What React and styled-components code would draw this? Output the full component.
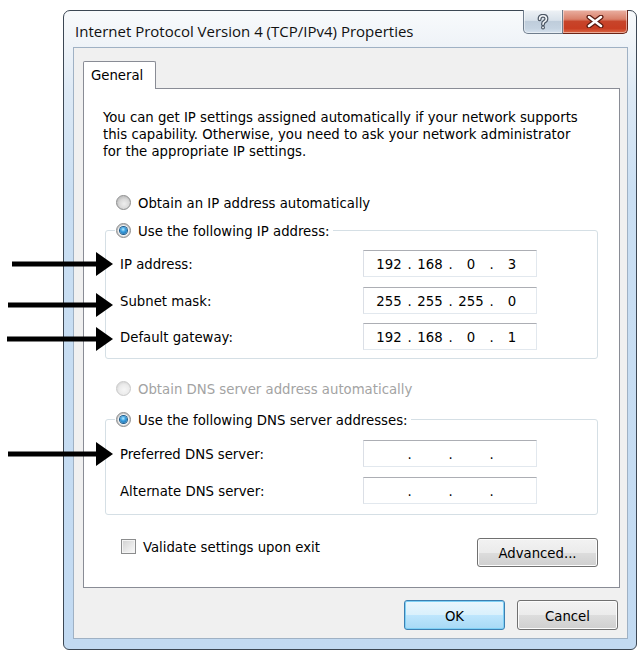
import React from "react";
import styled, { createGlobalStyle } from "styled-components";

const GlobalStyle = createGlobalStyle`
  html, body {
    margin: 0;
    padding: 0;
    background: #fff;
  }
  body {
    font-family: "DejaVu Sans Condensed", "DejaVu Sans", sans-serif;
    font-size: 14.75px;
    color: #000;
  }
`

const Page = styled.div`
  position: relative;
  width: 640px;
  height: 654px;
  padding: 10px 0 0 63px;
  box-sizing: border-box;
  overflow: hidden;
`

const Window = styled.div`
  width: 574px;
  height: 640px;
  box-sizing: border-box;
  border: 1px solid #3c4754;
  border-radius: 7px 7px 6px 6px;
  padding: 0 8px 10px 9px;
  display: flex;
  flex-direction: column;
  background: linear-gradient(180deg, #f8fafc 0px, #f0f4f8 30px, #dde9f5 80px, #cadff3 180px, #c2daf2 100%);
`

const TitleBar = styled.div`
  height: 36px;
  display: flex;
  align-items: flex-start;
  justify-content: space-between;
`

const Title = styled.div`
  margin-top: 11px;
  padding-left: 2px;
  font-family: "Open Sans", "Noto Sans", sans-serif;
  font-size: 15px;
  line-height: 19px;
  color: #111;
`

const Caption = styled.div`
  display: flex;
  margin-top: -1px;
`

const CaptionButton = styled.div`
  height: 24px;
  width: ${p => p.$w}px;
  box-sizing: border-box;
  display: flex;
  align-items: center;
  justify-content: center;
  border: 1px solid ${p => (p.$close ? "#6b2417" : "#6f7d8d")};
  border-top: none;
  border-left: ${p => (p.$close ? "none" : "1px solid #6f7d8d")};
  border-radius: ${p => (p.$close ? "0 0 5px 0" : "0 0 0 5px")};
  background: ${p =>
    p.$close
      ? "linear-gradient(180deg, #eab0a2 0%, #d9806a 40%, #c7442a 50%, #c83d22 80%, #dc6a48 100%)"
      : "linear-gradient(180deg, #eef2f6 0%, #d8e1ea 45%, #bfcddb 50%, #c5d3e1 80%, #d6e2ee 100%)"};
  box-shadow: inset 0 0 0 1px rgba(255, 255, 255, 0.45);
`

const Client = styled.div`
  flex: 1;
  display: flex;
  flex-direction: column;
  background: #f0f0f0;
  border: 1px solid #9fb1c4;
  padding: 13px 7px 8px 9px;
`

const TabStrip = styled.div`
  display: flex;
  height: 27px;
`

const Tab = styled.div`
  position: relative;
  z-index: 1;
  width: 73px;
  height: 28px;
  box-sizing: border-box;
  border: 1px solid #898c95;
  border-bottom: none;
  border-radius: 2px 2px 0 0;
  background: #fff;
  padding: 4px 0 0 7px;
  line-height: 17px;
`

const Panel = styled.div`
  background: #fff;
  border: 1px solid #898c95;
  padding: 19px 20px 20px 19px;
`

const Intro = styled.p`
  margin: 0;
  line-height: 17px;
`

const Option = styled.div`
  display: flex;
  align-items: center;
  gap: 7px;
  height: 17px;
  line-height: 17px;
  margin: ${p => p.$mt || 0}px 0 0 13px;
  color: ${p => (p.$disabled ? "#a3a3a3" : "#000")};
`

const Radio = styled.span`
  flex: none;
  width: 15px;
  height: 15px;
  box-sizing: border-box;
  border-radius: 50%;
  border: 1px solid ${p => (p.$disabled ? "#c9c9c9" : "#8b8c8d")};
  background: ${p =>
    p.$disabled
      ? "radial-gradient(circle at 55% 60%, #f6f6f6 0%, #ebebeb 50%, #dcdcdc 70%, #f2f2f2 100%)"
      : "radial-gradient(circle at 55% 60%, #eeeeee 0%, #d9d9d9 45%, #c2c2c2 68%, #f3f3f3 100%)"};
  display: flex;
  align-items: center;
  justify-content: center;
  &::after {
    content: "";
    display: ${p => (p.$checked ? "block" : "none")};
    width: 7px;
    height: 7px;
    border-radius: 50%;
    background: radial-gradient(circle at 45% 35%, #b5ecff 0%, #3a9fe0 40%, #125f9c 100%);
    box-shadow: 0 0 0 1px #1c5a8a, 0 0 0 2px #f4f4f4;
  }
`

const Group = styled.fieldset`
  width: 493px;
  box-sizing: border-box;
  margin: ${p => p.$mt}px 0 0 2px;
  padding: ${p => p.$pt}px 0 ${p => p.$pb}px 14px;
  border: 1px solid #d5dfe5;
  border-radius: 3px;
  min-width: 0;
`

const Legend = styled.legend`
  margin-left: -5px;
  padding: 0 3px 0 1px;
  line-height: 17px;
  display: flex;
  align-items: center;
  gap: 7px;
`

const Rows = styled.div`
  display: grid;
  grid-template-columns: 243px 174px;
  grid-auto-rows: 27px;
  row-gap: 9.5px;
  align-items: center;
`

const FieldLabel = styled.div`
  line-height: 17px;
`

const IpBox = styled.div`
  height: 27px;
  box-sizing: border-box;
  display: flex;
  align-items: center;
  padding-left: 8px;
  background: #fff;
  border: 1px solid #e2e8ee;
  border-top-color: #acaeb4;
  border-left-color: #dbdfe6;
`

const Octet = styled.span`
  width: 34px;
  text-align: center;
  line-height: 17px;
`

const Dot = styled.span`
  width: 7px;
  text-align: center;
  line-height: 17px;
`

const ActionRow = styled.div`
  width: 495px;
  box-sizing: border-box;
  margin-top: 23.5px;
  padding-left: 18px;
  display: flex;
  justify-content: space-between;
  align-items: flex-start;
`

const CheckLabel = styled.label`
  display: flex;
  align-items: center;
  gap: 7px;
  height: 17px;
  line-height: 17px;
`

const CheckBox = styled.span`
  flex: none;
  width: 15px;
  height: 15px;
  box-sizing: border-box;
  border: 1px solid #8b8c8d;
  background: linear-gradient(135deg, #d0d0d0 0%, #e8e8e8 55%, #fafafa 100%);
  box-shadow: inset 0 0 0 1px #f4f4f4;
`

const Button = styled.button`
  width: ${p => p.$w}px;
  height: ${p => p.$h}px;
  box-sizing: border-box;
  padding: 0;
  font: inherit;
  color: #000;
  border-radius: 3px;
  border: 1px solid ${p => (p.$default ? "#3c7fb1" : "#707070")};
  background: ${p =>
    p.$default
      ? "linear-gradient(180deg, #eaf6fd 0%, #d9f0fc 50%, #bee6fd 50%, #a7d9f5 100%)"
      : "linear-gradient(180deg, #f2f2f2 0%, #ebebeb 50%, #dddddd 50%, #cfcfcf 100%)"};
  box-shadow: inset 0 0 0 1px ${p => (p.$default ? "#7fd0f5" : "#fcfcfc")};
`

const Footer = styled.div`
  margin-top: 12px;
  padding-right: 2px;
  display: flex;
  justify-content: flex-end;
  gap: 12px;
`

const ArrowMark = styled.svg`
  position: absolute;
  left: ${p => p.$x}px;
  top: ${p => p.$y - 12}px;
  pointer-events: none;
`

const HelpGlyph = () => (
  <svg width="12" height="16" viewBox="0 0 12 16">
    <path d="M2.6 5.2 Q2.6 1.8 6 1.8 Q9.4 1.8 9.4 4.8 Q9.4 6.6 7.4 7.6 Q6 8.3 6 10.2" fill="none" stroke="#4d5866" strokeWidth="4" strokeLinecap="round" />
    <path d="M2.6 5.2 Q2.6 1.8 6 1.8 Q9.4 1.8 9.4 4.8 Q9.4 6.6 7.4 7.6 Q6 8.3 6 10.2" fill="none" stroke="#f4f7fa" strokeWidth="1.6" strokeLinecap="round" />
    <circle cx="6" cy="13.4" r="2" fill="#4d5866" />
    <circle cx="6" cy="13.4" r="0.9" fill="#f4f7fa" />
  </svg>
)

const CloseGlyph = () => (
  <svg width="18" height="13" viewBox="0 0 18 13">
    <path d="M3 2 L15 11 M15 2 L3 11" stroke="#5a1a10" strokeWidth="5" strokeLinecap="round" />
    <path d="M3 2 L15 11 M15 2 L3 11" stroke="#ffffff" strokeWidth="2.6" strokeLinecap="round" />
  </svg>
)

const Arrow = ({ x, y }) => {
  const len = 113 - x
  return (
    <ArrowMark $x={x} $y={y} width={len} height="24" viewBox={`0 0 ${len} 24`}>
      <rect x="0" y="9.5" width={len - 15} height="5" fill="#000" />
      <polygon points={`${len - 17},0 ${len},12 ${len - 17},24`} fill="#000" />
    </ArrowMark>
  )
}

const IpField = ({ value }) => {
  const parts = value ? value.split(".") : ["", "", "", ""]
  return (
    <IpBox>
      {parts.map((p, i) => (
        <React.Fragment key={i}>
          <Octet>{p}</Octet>
          {i < 3 && <Dot>.</Dot>}
        </React.Fragment>
      ))}
    </IpBox>
  )
}

const ipRows = [
  { label: "IP address:", value: "192.168.0.3" },
  { label: "Subnet mask:", value: "255.255.255.0" },
  { label: "Default gateway:", value: "192.168.0.1" },
]

const dnsRows = [
  { label: "Preferred DNS server:", value: "" },
  { label: "Alternate DNS server:", value: "" },
]

const arrows = [
  { x: 12, y: 263.5 },
  { x: 8, y: 305 },
  { x: 7, y: 339 },
  { x: 8, y: 454 },
]

const App = () => {
  return (
    <Page>
      <GlobalStyle />
      <Window>
        <TitleBar>
          <Title>Internet Protocol Version 4 (TCP/IPv4) Properties</Title>
          <Caption>
            <CaptionButton $w={40}><HelpGlyph /></CaptionButton>
            <CaptionButton $w={65} $close><CloseGlyph /></CaptionButton>
          </Caption>
        </TitleBar>

        <Client>
          <TabStrip>
            <Tab>General</Tab>
          </TabStrip>
          <Panel>
            <Intro>
              You can get IP settings assigned automatically if your network supports<br />
              this capability. Otherwise, you need to ask your network administrator<br />
              for the appropriate IP settings.
            </Intro>

            <Option $mt={34.5}>
              <Radio />
              Obtain an IP address automatically
            </Option>

            <Group $mt={11} $pt={11.5} $pb={8}>
              <Legend>
                <Radio $checked />
                Use the following IP address:
              </Legend>
              <Rows>
                {ipRows.map(({ label, value }) => (
                  <React.Fragment key={label}>
                    <FieldLabel>{label}</FieldLabel>
                    <IpField value={value} />
                  </React.Fragment>
                ))}
              </Rows>
            </Group>

            <Option $mt={20.5} $disabled>
              <Radio $disabled />
              Obtain DNS server address automatically
            </Option>

            <Group $mt={14.5} $pt={12} $pb={10}>
              <Legend>
                <Radio $checked />
                Use the following DNS server addresses:
              </Legend>
              <Rows>
                {dnsRows.map(({ label, value }) => (
                  <React.Fragment key={label}>
                    <FieldLabel>{label}</FieldLabel>
                    <IpField value={value} />
                  </React.Fragment>
                ))}
              </Rows>
            </Group>

            <ActionRow>
              <CheckLabel>
                <CheckBox />
                Validate settings upon exit
              </CheckLabel>
              <Button $w={121} $h={29}>Advanced...</Button>
            </ActionRow>
          </Panel>

          <Footer>
            <Button $w={101} $h={30} $default>OK</Button>
            <Button $w={101} $h={30}>Cancel</Button>
          </Footer>
        </Client>
      </Window>

      {arrows.map(a => (
        <Arrow key={a.y} x={a.x} y={a.y} />
      ))}
    </Page>
  )
}

export default App;
